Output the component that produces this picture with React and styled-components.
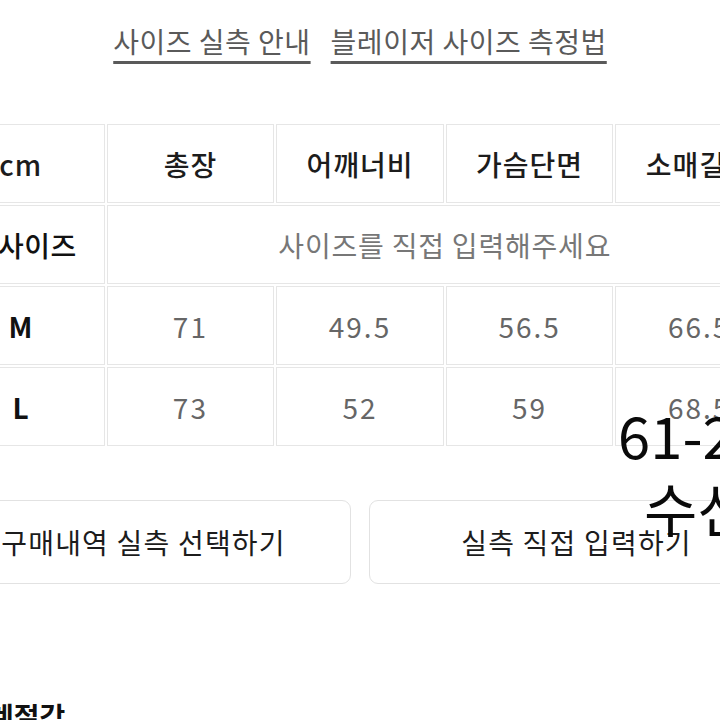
import React from 'react'
import styled, { createGlobalStyle } from 'styled-components'

const GlobalStyle = createGlobalStyle`
  html, body {
    margin: 0;
    padding: 0;
    background: #ffffff;
    overflow: hidden;
  }
  body {
    font-family: "Noto Sans CJK KR", "Noto Sans", sans-serif;
    color: #222;
  }
`

const columns = ['총장', '어깨너비', '가슴단면', '소매길이']

const sizes = [
  { label: 'M', values: ['71', '49.5', '56.5', '66.5'] },
  { label: 'L', values: ['73', '52', '59', '68.5'] },
]

function App() {
  return (
    <Page>
      <GlobalStyle />
      <LinkRow>
        <GuideLink href="#">사이즈 실측 안내</GuideLink>
        <GuideLink href="#">블레이저 사이즈 측정법</GuideLink>
      </LinkRow>

      <SizeTable>
        <tbody>
          <tr>
            <HeadCell>cm</HeadCell>
            {columns.map(c => (
              <HeadCell key={c}>{c}</HeadCell>
            ))}
          </tr>
          <tr>
            <LabelCell light>내 사이즈</LabelCell>
            <Cell colSpan={4} hint>
              사이즈를 직접 입력해주세요
            </Cell>
          </tr>
          {sizes.map(s => (
            <tr key={s.label}>
              <LabelCell>{s.label}</LabelCell>
              {s.values.map((v, i) => (
                <Cell key={i} numeric>{v}</Cell>
              ))}
            </tr>
          ))}
        </tbody>
      </SizeTable>

      <ButtonRow>
        <ActionButton>구매내역 실측 선택하기</ActionButton>
        <ActionButton>실측 직접 입력하기</ActionButton>
      </ButtonRow>

      <SectionTitle>계절감</SectionTitle>

      {/* hand-written note laid over the screenshot */}
      <Note top={405} left={618}>61-2</Note>
      <Note top={478} left={644}>수선</Note>
    </Page>
  )
}

export default App

const Page = styled.div`
  position: relative;
  width: 848px;
  margin-left: -64px;
  height: 720px;
`

const LinkRow = styled.div`
  display: flex;
  justify-content: center;
  gap: 20px;
  padding-top: 22px;
`

const GuideLink = styled.a`
  font-size: 28px;
  line-height: 38px;
  color: #5a5a5a;
  text-decoration: underline;
  text-decoration-thickness: 3px;
  text-underline-offset: 8px;
  letter-spacing: 0.5px;
`

const SizeTable = styled.table`
  width: 850px;
  margin-top: 62px;
  margin-left: -1px;
  table-layout: fixed;
  border-collapse: separate;
  border-spacing: 2px;
`

const Cell = styled.td`
  height: 77px;
  padding: 0;
  border: 1px solid #e6e6e6;
  text-align: center;
  vertical-align: middle;
  font-size: 28px;
  color: ${props => (props.hint ? '#777' : '#666')};
  letter-spacing: ${props => (props.numeric ? '2px' : '0.8px')};
`

const HeadCell = styled(Cell)`
  color: #1c1c1c;
  font-weight: 500;
  letter-spacing: 1px;
`

const LabelCell = styled(Cell)`
  color: #111;
  font-weight: ${props => (props.light ? 500 : 700)};
  letter-spacing: 0.5px;
`

const ButtonRow = styled.div`
  display: grid;
  grid-template-columns: 1fr 1fr;
  gap: 18px;
  margin-top: 52px;
`

const ActionButton = styled.div`
  height: 84px;
  box-sizing: border-box;
  border: 1.5px solid #e2e2e2;
  border-radius: 9px;
  display: flex;
  align-items: center;
  justify-content: center;
  font-size: 28px;
  color: #1c1c1c;
  letter-spacing: 1.2px;
`

const SectionTitle = styled.h2`
  margin: 114px 0 0 52px;
  font-size: 28px;
  font-weight: 700;
  color: #111;
  line-height: 36px;
`

const Note = styled.div`
  position: absolute;
  top: ${props => props.top}px;
  left: ${props => props.left + 64}px;
  font-size: 58px;
  line-height: 1;
  font-weight: 400;
  color: #0a0a0a;
  white-space: nowrap;
`
